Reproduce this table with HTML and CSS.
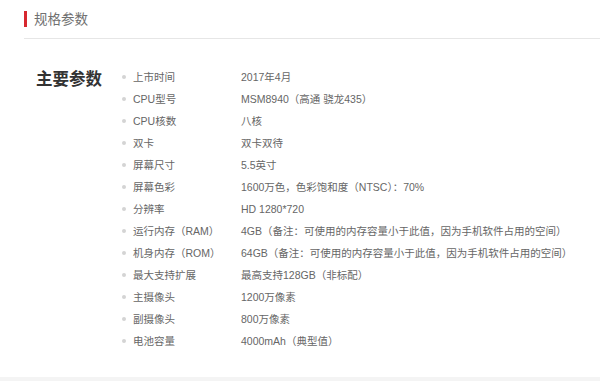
FILE: index.html
```html
<!DOCTYPE html>
<html lang="zh-CN">
<head>
<meta charset="utf-8">
<title>规格参数</title>
<link rel="stylesheet" href="styles.css">
</head>
<body>
<div class="page">
  <div class="header">
    <span class="bar"></span>
    <h2 class="title">规格参数</h2>
  </div>
  <div class="section">
    <h3 class="section-title">主要参数</h3>
    <ul class="specs">
      <li><span class="label">上市时间</span><span class="value">2017年4月</span></li>
      <li><span class="label">CPU型号</span><span class="value">MSM8940（高通 骁龙435）</span></li>
      <li><span class="label">CPU核数</span><span class="value">八核</span></li>
      <li><span class="label">双卡</span><span class="value">双卡双待</span></li>
      <li><span class="label">屏幕尺寸</span><span class="value">5.5英寸</span></li>
      <li><span class="label">屏幕色彩</span><span class="value">1600万色，色彩饱和度（NTSC）：70%</span></li>
      <li><span class="label">分辨率</span><span class="value">HD 1280*720</span></li>
      <li><span class="label">运行内存（RAM）</span><span class="value">4GB（备注：可使用的内存容量小于此值，因为手机软件占用的空间）</span></li>
      <li><span class="label">机身内存（ROM）</span><span class="value">64GB（备注：可使用的内存容量小于此值，因为手机软件占用的空间）</span></li>
      <li><span class="label">最大支持扩展</span><span class="value">最高支持128GB（非标配）</span></li>
      <li><span class="label">主摄像头</span><span class="value">1200万像素</span></li>
      <li><span class="label">副摄像头</span><span class="value">800万像素</span></li>
      <li><span class="label">电池容量</span><span class="value">4000mAh（典型值）</span></li>
    </ul>
  </div>
  <div class="footer-band"></div>
</div>
</body>
</html>
```

FILE: styles.css
```css
html, body {
  margin: 0;
  padding: 0;
  background: #fff;
}

.page {
  font-family: "Liberation Sans", "Noto Sans CJK SC", sans-serif;
  color: #666;
}

.header {
  display: flex;
  align-items: center;
  height: 38px;
  margin-left: 24px;
  border-bottom: 1px solid #e6e6e6;
}

.bar {
  width: 3px;
  height: 16px;
  background: #d7282f;
}

.title {
  margin: 1px 0 0 7px;
  font-size: 13.5px;
  font-weight: normal;
  color: #707070;
  line-height: 20px;
}

.section {
  display: flex;
  padding: 27px 0 0 36px;
}

.section-title {
  width: 86px;
  margin: 1px 0 0 0;
  font-size: 16.5px;
  font-weight: bold;
  color: #333;
  line-height: 24px;
}

.specs {
  list-style: none;
  margin: 0;
  padding: 0;
  font-family: "Liberation Sans", "Noto Sans CJK TC", "Noto Sans CJK SC", sans-serif;
}

.specs li {
  display: flex;
  align-items: center;
  height: 22px;
  font-size: 10.5px;
  line-height: 22px;
  white-space: nowrap;
}

.specs li::before {
  content: "";
  width: 4px;
  height: 4px;
  border-radius: 50%;
  background: #d4d4d4;
  margin-right: 7px;
}

.label {
  width: 108px;
  color: #666;
}

.value {
  color: #666;
}

.footer-band {
  margin-top: 25px;
  height: 20px;
  background: #f4f4f4;
}
```
